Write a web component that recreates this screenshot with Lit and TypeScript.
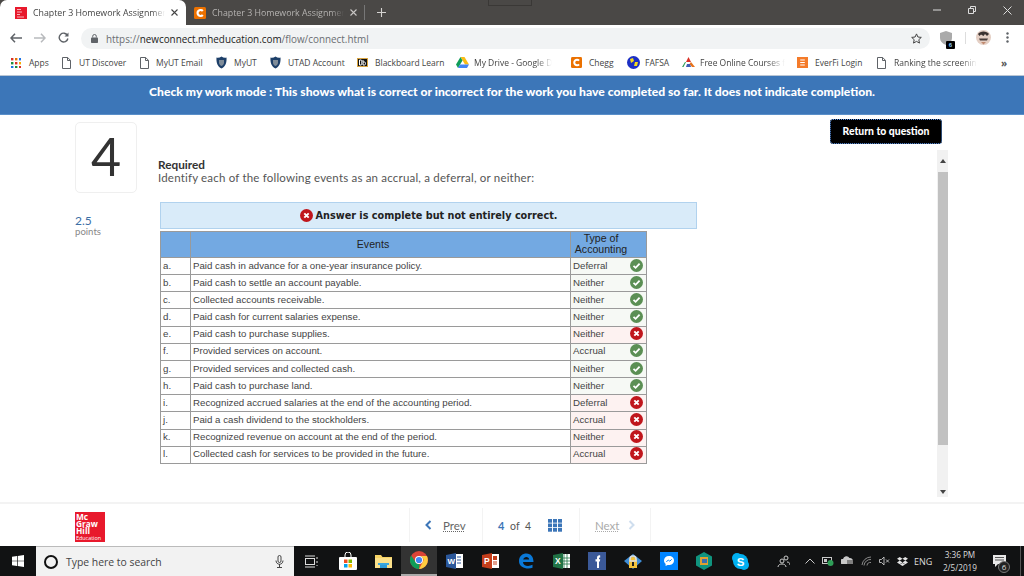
import { LitElement, html, css, svg } from "lit";
import { customElement } from "lit/decorators.js";

const docIcon = (c = "#5f6368") => html`<svg class="ic" width="9" height="12" viewBox="0 0 9 12"><path d="M.5.500h5.200L8.500 3.400v8.100H.5z M5.500 .5v3h3" fill="#fff" stroke="${c}" stroke-width="1"/></svg>`;
const shield = html`<svg class="ic" width="11" height="13" viewBox="0 0 11 13"><path d="M.5 1.500C2 2 4 1.600 5.500.5 7 1.600 9 2 10.500 1.500c.4 5-1 9-5 11-4-2-5.400-6-5-11z" fill="#1d3f69"/><path d="M3 4h5v2.500c0 2-1.200 3-2.500 3.500C4.200 9.500 3 8.500 3 6.500z" fill="#7f8c99"/></svg>`;
const appsIcon = html`<svg class="ic" width="10" height="10" viewBox="0 0 10 10">${[
  ["#d93025","#e37400","#1a73e8"],["#1e8e3e","#d93025","#f9ab00"],["#1a73e8","#1e8e3e","#d93025"],
].map((row, y) => row.map((c, x) => svg`<rect x="${x * 4}" y="${y * 4}" width="2.400" height="2.400" fill="${c}"/>`))}</svg>`;
const bb = html`<svg class="ic" width="11" height="9" viewBox="0 0 11 9"><rect x=".5" y=".5" width="10" height="8" fill="#111" stroke="#d9a441"/><path d="M2.500 2v5h1.600c1 0 1-2.500 0-2.500 1 0 1-2.500 0-2.500zM6 2v5h1.600c1.200 0 1.200-3 0-3H6" fill="none" stroke="#fff"/></svg>`;
const drive = html`<svg class="ic" width="13" height="11" viewBox="0 0 13 11"><path d="M4.500 0h4L13 7.500H9z" fill="#f9bc15"/><path d="M4.500 0 0 7.500l2 3.500L6.500 3.500z" fill="#0f9d58"/><path d="M2 11h9l2-3.500H4z" fill="#4285f4"/></svg>`;
const chegg = (s = 11) => html`<svg class="ic" width="${s}" height="${s}" viewBox="0 0 12 12"><rect width="12" height="12" rx="1.500" fill="#eb7100"/><path d="M8.800 4A3 3 0 1 0 8.800 8" fill="none" stroke="#fff" stroke-width="2.200"/></svg>`;
const fafsa = html`<svg class="ic" width="13" height="13" viewBox="0 0 13 13"><circle cx="6.500" cy="6.500" r="6.500" fill="#1c2fc4"/><path d="M3 3l3-1 1 3-3 2zM8 6l3 0-1 4-3 0z" fill="#f2d91e"/></svg>`;
const free = html`<svg class="ic" width="13" height="11" viewBox="0 0 13 11"><path d="M6.500 0 9 5H4z" fill="#d93025"/><path d="M4 5 1.500 10H0L3 5z" fill="#2f9e58"/><path d="M9 5l4 5h-3L7.500 7z" fill="#e8711a"/><path d="M5 7h3l1 3H4z" fill="#3f5fb5"/></svg>`;
const everfi = html`<svg class="ic" width="11" height="11" viewBox="0 0 12 12"><rect width="12" height="12" fill="#f47b2a"/><path d="M3.500 3.200h5M3.500 6h5M3.500 8.800h5" stroke="#fff" stroke-width="1.200"/></svg>`;

const bookmarks = [
  { t: "Apps", i: appsIcon, w: 51, g: 8 },
  { t: "UT Discover", i: docIcon(), w: 78, g: 8 },
  { t: "MyUT Email", i: docIcon(), w: 76, g: 7 },
  { t: "MyUT", i: shield, w: 54, g: 7 },
  { t: "UTAD Account", i: shield, w: 87, g: 7 },
  { t: "Blackboard Learn", i: bb, w: 99, g: 7 },
  { t: "My Drive - Google D", i: drive, w: 115, g: 5, fade: true },
  { t: "Chegg", i: chegg(), w: 56, g: 7 },
  { t: "FAFSA", i: fafsa, w: 55, g: 5 },
  { t: "Free Online Courses f", i: free, w: 115, g: 5, fade: true },
  { t: "EverFi Login", i: everfi, w: 80, g: 7 },
  { t: "Ranking the screenin", i: docIcon(), w: 113, g: 8, fade: true },
];

const rows: [string, string, string, boolean][] = [
  ["a.", "Paid cash in advance for a one-year insurance policy.", "Deferral", true],
  ["b.", "Paid cash to settle an account payable.", "Neither", true],
  ["c.", "Collected accounts receivable.", "Neither", true],
  ["d.", "Paid cash for current salaries expense.", "Neither", true],
  ["e.", "Paid cash to purchase supplies.", "Neither", false],
  ["f.", "Provided services on account.", "Accrual", true],
  ["g.", "Provided services and collected cash.", "Neither", true],
  ["h.", "Paid cash to purchase land.", "Neither", true],
  ["i.", "Recognized accrued salaries at the end of the accounting period.", "Deferral", false],
  ["j.", "Paid a cash dividend to the stockholders.", "Accrual", false],
  ["k.", "Recognized revenue on account at the end of the period.", "Neither", false],
  ["l.", "Collected cash for services to be provided in the future.", "Accrual", false],
];

const okIcon = html`<svg class="ic" width="13" height="13" viewBox="0 0 13 13"><circle cx="6.500" cy="6.500" r="6.500" fill="#5b8f54"/><path d="M3.500 6.800 5.600 8.800 9.600 4.600" fill="none" stroke="#fff" stroke-width="1.800"/></svg>`;
const badIcon = html`<svg class="ic" width="13" height="13" viewBox="0 0 13 13"><circle cx="6.500" cy="6.500" r="6.500" fill="#c0161c"/><path d="M4.300 4.300 8.700 8.700M8.700 4.300 4.300 8.700" fill="none" stroke="#fff" stroke-width="1.900"/></svg>`;

const win = html`<svg class="ic" width="12" height="12" viewBox="0 0 12 12"><path d="M0 1.700 5 1v4.700H0zM5.700.9 12 0v5.700H5.700zM0 6.300h5V11l-5-.7zM5.700 6.300H12V12l-6.300-.9z" fill="#fff"/></svg>`;
const taskIcons = [
  html`<svg class="ic" width="13" height="13" viewBox="0 0 13 13"><rect x=".5" y="3.500" width="9" height="6" fill="none" stroke="#ddd"/><path d="M0 1h10M0 12h10M12 2v2M12 6v2M12 10v1" stroke="#ddd"/></svg>`,
  html`<svg class="ic" width="18" height="18" viewBox="0 0 18 18"><path d="M6 5V3a3 3 0 0 1 6 0v2" fill="none" stroke="#fff"/><rect y="5" width="18" height="13" rx="1" fill="#fff"/><rect x="5" y="7.500" width="3.500" height="3.500" fill="#f25022"/><rect x="9.500" y="7.500" width="3.500" height="3.500" fill="#7fba00"/><rect x="5" y="12" width="3.500" height="3.500" fill="#00a4ef"/><rect x="9.500" y="12" width="3.500" height="3.500" fill="#ffb900"/></svg>`,
  html`<svg class="ic" width="17" height="14" viewBox="0 0 17 14"><path d="M0 1h6l1.500 2H17v11H0z" fill="#f6d365"/><rect y="4" width="17" height="10" fill="#fbe08a"/><path d="M5 14v-3h7v3" fill="#2f9bd8"/><rect x="3" y="9" width="11" height="2" fill="#38a6e0"/></svg>`,
  html`<svg class="ic" width="18" height="18" viewBox="0 0 18 18"><circle cx="9" cy="9" r="9" fill="#db4437"/><path d="M9 18a9 9 0 0 1-7.800-13.500L5.500 11a4 4 0 0 0 4 2z" fill="#0f9d58"/><path d="M9 5h7.900A9 9 0 0 1 9 18l3.500-6.500A4 4 0 0 0 9 5z" fill="#ffcd40"/><circle cx="9" cy="9" r="4" fill="#fff"/><circle cx="9" cy="9" r="3.100" fill="#4285f4"/></svg>`,
  html`<svg class="ic" width="17" height="16" viewBox="0 0 17 16"><rect x="5" y="1" width="12" height="14" fill="#fff"/><path d="M11 4h4M11 7h4M11 10h4" stroke="#2b579a"/><path d="M0 2 10 0v16L0 14z" fill="#2b579a"/><text x="1.500" y="11" font-size="8" font-weight="700" fill="#fff" font-family="Liberation Sans">W</text></svg>`,
  html`<svg class="ic" width="17" height="16" viewBox="0 0 17 16"><rect x="5" y="1" width="12" height="14" fill="#fff"/><path d="M11 9h4M11 11h4" stroke="#c43e1c"/><rect x="11" y="3" width="4" height="4" fill="#c43e1c"/><path d="M0 2 10 0v16L0 14z" fill="#c43e1c"/><text x="2" y="11" font-size="8.500" font-weight="700" fill="#fff" font-family="Liberation Sans">P</text></svg>`,
  html`<svg class="ic" width="16" height="16" viewBox="0 0 16 16"><path d="M1 8C1 3 4.500.5 8.500.5 13 .5 15.500 4 15.500 9H5c0 4 5.500 5 9.500 2.800v3C10 16.500 1 15.500 1 8zM5.200 6.500h6C11 3 5.800 3 5.200 6.500z" fill="#0a78d7"/></svg>`,
  html`<svg class="ic" width="17" height="16" viewBox="0 0 17 16"><rect x="5" y="1" width="12" height="14" fill="#fff"/><path d="M11 1v14M14 1v14M5 5h12M5 8h12M5 11h12" stroke="#217346" stroke-width=".8"/><path d="M0 2 10 0v16L0 14z" fill="#217346"/><text x="2" y="11" font-size="8.500" font-weight="700" fill="#fff" font-family="Liberation Sans">X</text></svg>`,
  html`<svg class="ic" width="18" height="18" viewBox="0 0 18 18"><rect width="18" height="18" fill="#3b5998"/><path d="M9 16V9.500H7.500V7.300H9V6c0-2 1-2.800 3.200-2.600v2c-1 0-1.200.2-1.200.9v1h1.200l-.3 2.200H11V16z" fill="#fff"/></svg>`,
  html`<svg class="ic" width="18" height="18" viewBox="0 0 18 18"><path d="M0 9 9 2l9 7-9 8z" fill="#3f8ed8"/><path d="M5 9a4 4 0 0 1 8 0v7H5z" fill="#f3c23c"/><path d="M6 7a3 3 0 0 1 6 0v2H6z" fill="none" stroke="#ddd" stroke-width="1.500"/><rect x="8" y="10" width="2" height="4" fill="#222"/></svg>`,
  html`<svg class="ic" width="18" height="18" viewBox="0 0 18 18"><rect width="18" height="18" fill="#0084ff"/><path d="M9 4C6 4 4 6 4 8.500c0 1.400.6 2.500 1.600 3.300V14l2-1.100c2.500.6 6.400-.6 6.400-4.400C14 6 12 4 9 4z" fill="#fff"/><path d="M6.300 10 8.300 8l1.500 1.200L11.700 7.300" fill="none" stroke="#0084ff"/></svg>`,
  html`<svg class="ic" width="16" height="18" viewBox="0 0 16 18"><path d="M8 0l8 4.500v9L8 18l-8-4.500v-9z" fill="#10947f"/><rect x="4" y="5" width="8" height="8" fill="#e0a030"/><rect x="6" y="7" width="5" height="4" fill="#3b6fb0"/></svg>`,
  html`<svg class="ic" width="17" height="17" viewBox="0 0 17 17"><circle cx="5" cy="5" r="5" fill="#00aff0"/><circle cx="12" cy="12" r="5" fill="#00aff0"/><circle cx="8.500" cy="8.500" r="7.500" fill="#00aff0"/><text x="8.500" y="12.500" text-anchor="middle" font-size="11.500" font-weight="700" fill="#fff" font-family="Liberation Sans">S</text></svg>`,
];

const grayC = "#c9c9c9";
const tray = [
  html`<svg class="ic" width="10" height="6" viewBox="0 0 10 6"><path d="M.5 5.500 5 1l4.500 4.500" fill="none" stroke="${grayC}"/></svg>`,
  html`<svg class="ic" width="12" height="9" viewBox="0 0 12 9"><rect x=".5" y=".5" width="9" height="6" fill="none" stroke="${grayC}"/><rect x="2" y="2" width="3" height="3" fill="${grayC}"/><circle cx="8.500" cy="6" r="3" fill="#2f9e58"/></svg>`,
  html`<svg class="ic" width="13" height="10" viewBox="0 0 13 10"><path d="M1 8a2.500 2.500 0 0 1 1-5 3.500 3.500 0 0 1 6.500-1A3 3 0 0 1 12 5v3z" fill="${grayC}"/><path d="M7 4v6M9 4v6M11 4v6" stroke="#111" stroke-width=".8"/></svg>`,
  html`<svg class="ic" width="11" height="10" viewBox="0 0 11 10"><path d="M1 9a9 9 0 0 1 9-8M3 9.500a6.500 6.500 0 0 1 7-6M6 9.500a3.500 3.500 0 0 1 4-3" fill="none" stroke="#8a8a8a"/></svg>`,
  html`<svg class="ic" width="11" height="10" viewBox="0 0 11 10"><path d="M.5 3.500h2L5 1v8L2.500 6.500h-2z" fill="none" stroke="${grayC}" stroke-width=".9"/><path d="M7 3.500l3 3M10 3.500l-3 3" stroke="${grayC}" stroke-width=".9"/></svg>`,
  html`<svg class="ic" width="11" height="9" viewBox="0 0 11 9"><path d="M2.750 0 5.500 1.800 2.750 3.600 0 1.800zM8.250 0 11 1.800 8.250 3.600 5.500 1.800zM2.750 3.600 5.500 5.400 2.750 7.200 0 5.400zM8.250 3.600 11 5.400 8.250 7.200 5.500 5.400zM2.900 7.600 5.500 6 8.100 7.600 5.500 9z" fill="#e4e4e4"/></svg>`,
];

@customElement("app-root")
export class AppRoot extends LitElement {
  static styles = css`
    :host { display: flex; flex-direction: column; width: 1024px; height: 576px; overflow: hidden; background: #fff; font-family: "Lato", sans-serif; position: relative; }
    * { box-sizing: border-box; }
    .ic { display: block; flex: none; }

    .tabs { height: 25px; background: #4a4846; display: flex; align-items: stretch; flex: none; position: relative; }
    .notch { position: absolute; left: 488px; top: 0; width: 44px; height: 6px; border: 1px solid #3a3836; border-top: 0; }
    .tab { display: flex; align-items: center; font: 8.800px "Open Sans", sans-serif; white-space: nowrap; }
    .tab.on { width: 186px; background: #fff; border-radius: 7px 7px 0 0; padding-left: 15px; color: #444; }
    .tab.off { width: 178px; padding-left: 8px; color: #b5b3b1; }
    .tab .lbl { -webkit-mask-image: linear-gradient(90deg,#000 90%,transparent); mask-image: linear-gradient(90deg,#000 90%,transparent); width: 132px; margin-left: 6px; }
    .tab svg.x { margin-left: 6px; }
    .tabsep { width: 1px; height: 15px; background: #777; align-self: center; }
    .plus { margin-left: 12px; align-self: center; }
    .spacer { flex: 1; }
    .winctl { display: flex; align-items: center; margin-right: 12px; gap: 27px; padding-bottom: 5px; }

    .toolbar { height: 25px; flex: none; display: flex; align-items: center; background: #fff; padding-left: 10px; }
    .nav-btns { display: flex; align-items: center; gap: 12px; width: 71px; }
    .address { width: 849px; height: 21px; margin-top: 2px; background: #f1f3f4; border-radius: 11px; display: flex; align-items: center; padding: 0 8px 0 10px; font: 9.900px "Open Sans", sans-serif; color: #6b6e72; }
    .address .dom { color: #222; }
    .address .url { margin-left: 8px; flex: 1; }
    .tool-right { display: flex; align-items: center; position: relative; flex: 1; padding-left: 10px; }
    .ext { position: relative; width: 12px; height: 14px; }
    .ext-badge { position: absolute; right: -3px; bottom: -4px; width: 9px; height: 8px; background: #000; border-radius: 1px; color: #8cf; font: 700 6px "Liberation Sans", sans-serif; text-align: center; line-height: 8px; }
    .tsep { width: 1px; height: 12px; background: #ddd; margin: 0 10px 0 13px; }
    .menu { margin-left: 15px; }

    .bookmarks { height: 26px; flex: none; display: flex; align-items: center; padding-left: 11px; background: #fff; font: 8.500px "Open Sans", sans-serif; color: #444; position: relative; border-bottom: 1px solid #b9c6d5; }
    .bm { display: flex; align-items: center; flex: none; white-space: nowrap; }
    .bm .fade { -webkit-mask-image: linear-gradient(90deg,#000 80%,transparent 100%); mask-image: linear-gradient(90deg,#000 80%,transparent 100%); }
    .more { margin-left: 11px; color: #555; font-size: 10px; font-weight: 700; }

    .banner { height: 39px; flex: none; background: #3c76b8; border-bottom: 1px solid #5a8fc9; display: flex; align-items: center; justify-content: center; color: #fff; font-weight: 900; font-size: 12.150px; padding: 0 0 8px 0; }

    .content { flex: 1; min-height: 0; display: flex; padding-left: 75px; }
    .leftcol { width: 85px; flex: none; padding-top: 7px; }
    .qnum { width: 62px; height: 71px; border: 1px solid #efefef; border-radius: 5px; display: flex; align-items: center; justify-content: center; font-size: 52px; color: #333; font-weight: 400; padding-bottom: 3px; }
    .pts { margin-top: 21px; font-size: 12px; line-height: 13px; color: #3c6ea5; }
    .ptl { font-size: 9.600px; line-height: 10px; color: #888; }
    .maincol { width: 788px; flex: none; display: flex; flex-direction: column; min-height: 0; }
    .rethead { height: 35px; flex: none; display: flex; justify-content: flex-end; padding: 4px 6px 0 0; }
    .retbtn { width: 112px; height: 25px; background: #000; color: #fff; border: 1px dotted #5b95e8; border-radius: 3px; display: flex; align-items: center; justify-content: center; font-size: 10.400px; font-weight: 900; padding-bottom: 2px; }
    .scroller { flex: 1; min-height: 0; display: flex; margin-bottom: 5px; }
    .inner { flex: 1; padding-top: 8px; }
    .req { font-size: 11.800px; line-height: 13px; font-weight: 700; color: #333; margin-left: -2px; }
    .inst { font-size: 11.500px; line-height: 13px; color: #555; margin-left: -2px; letter-spacing: .19px; }
    .note { width: 537px; height: 27px; margin-top: 18px; background: #d9ebf9; border: 1px solid #b1d2ee; display: flex; align-items: center; justify-content: center; gap: 3px; font: 700 9.700px "DejaVu Sans", sans-serif; color: #222; }
    table { margin-top: 2px; width: 486px; border-collapse: collapse; table-layout: fixed; font: 9.700px "Liberation Sans", sans-serif; color: #444; }
    th, td { border: 1px solid #9a9a9a; padding: 0 2px 2px; text-align: left; font-weight: 400; overflow: hidden; white-space: nowrap; height: 17.170px; line-height: 11px; }
    th { background: #73a9e2; color: #222; text-align: center; font-size: 10.600px; height: 26px; padding: 0 17px 1px 2px; }
    td.ans { padding-right: 3px; }
    td.ans.ok { background: #f6f9f5; }
    td.ans.bad { background: #fdf2f1; }
    .anscell { display: flex; align-items: center; justify-content: space-between; }
    .sbar { width: 11px; flex: none; background: #f1f1f1; display: flex; flex-direction: column; align-items: center; }
    .sarrow { height: 22px; flex: none; display: flex; align-items: center; justify-content: center; }
    .sarrow.dn { height: 52px; align-items: flex-end; padding-bottom: 3px; }
    .thumb { flex: 1; width: 10px; background: #c1c1c1; }

    .footer { height: 44px; flex: none; border-top: 2px solid #f3f3f3; display: flex; align-items: center; padding-left: 75px; }
    .logo { width: 30px; height: 30px; margin-top: 3px; background: #e8192c; color: #fff; font: 700 8.300px/7.300px "Open Sans", sans-serif; padding: 1px 0 0 1px; }
    .logo small { display: block; font-size: 5.400px; line-height: 6px; margin-top: 1px; font-weight: 400; white-space: nowrap; }
    .pager { margin-left: 304px; display: flex; height: 34px; }
    .seg { display: flex; align-items: center; border-left: 1px solid #f3f3f3; font-size: 11.500px; }
    .seg.prev { width: 73px; padding-left: 15px; color: #666; gap: 11px; }
    .seg.prev u, .seg.next u { text-decoration: underline dotted; }
    .seg.page { width: 97px; padding-left: 15px; color: #555; font-size: 10.500px; word-spacing: 3px; }
    .seg.page b { color: #3c76b8; font-size: 11px; font-weight: 700; }
    .seg.page svg { margin-left: 17px; }
    .seg.next { width: 72px; padding-left: 15px; color: #aaa; gap: 9px; border-right: 1px solid #f3f3f3; }

    .taskbar { height: 30px; flex: none; background: #111213; display: flex; align-items: stretch; color: #ddd; }
    .start { width: 36px; display: flex; align-items: center; justify-content: center; }
    .search { width: 258px; background: #f2f2f2; border-top: 1px solid #bbb; display: flex; align-items: center; padding: 0 10px 0 8px; font: 10.400px "Open Sans", sans-serif; color: #444; }
    .search .ring { width: 14px; height: 14px; border: 2px solid #111; border-radius: 50%; margin-right: 8px; flex: none; }
    .search span { flex: 1; }
    .slot { width: 35.700px; display: flex; align-items: center; justify-content: center; flex: none; }
    .slot.active { background: #333; border-bottom: 2px solid #aaa; }
    .people { margin-left: 19px; width: 16px; display: flex; align-items: center; }
    .trayi { display: flex; align-items: center; gap: 7px; margin-left: 12px; }
    .eng { font: 9px "Open Sans", sans-serif; margin-left: 6px; width: 19px; display: flex; align-items: center; color: #ddd; }
    .clock { width: 54px; display: flex; flex-direction: column; align-items: center; justify-content: center; font: 8.200px/13px "Open Sans", sans-serif; color: #ddd; }
    .notif { position: relative; margin-left: 6px; display: flex; align-items: center; }
    .notif-b { position: absolute; left: 5px; top: 15px; width: 12px; height: 12px; border-radius: 50%; background: #222; border: 1px solid #777; color: #ddd; font: 8px/10px "Open Sans", sans-serif; text-align: center; }
    .edge { margin-left: auto; margin-right: 3px; width: 1px; background: #555; }
  `;

  render() {
    return html`
      <div class="tabs">
        <div class="notch"></div>
        <div class="tab on">
          <svg class="ic" width="12" height="12" viewBox="0 0 12 12"><rect width="12" height="12" fill="#e8192c"/><path d="M2 2.500h4M2 5h5M2 7.500h3M2 10h7" stroke="#f7b5bb"/></svg>
          <div class="lbl">Chapter 3 Homework Assignmen</div>
          <svg class="ic x" width="7" height="7" viewBox="0 0 7 7"><path d="M.5.500l6 6M6.500.500l-6 6" stroke="#444" stroke-width="1.100"/></svg>
        </div>
        <div class="tab off">
          ${chegg(12)}
          <div class="lbl">Chapter 3 Homework Assignmen</div>
          <svg class="ic x" width="7" height="7" viewBox="0 0 7 7"><path d="M.5.500l6 6M6.500.500l-6 6" stroke="#c9c7c5" stroke-width="1.100"/></svg>
        </div>
        <div class="tabsep"></div>
        <svg class="ic plus" width="9" height="9" viewBox="0 0 9 9"><path d="M4.500 0v9M0 4.500h9" stroke="#d5d3d1" stroke-width="1.100"/></svg>
        <div class="spacer"></div>
        <div class="winctl">
          <svg class="ic" width="8" height="8" viewBox="0 0 8 8"><path d="M0 4h8" stroke="#ddd"/></svg>
          <svg class="ic" width="8" height="8" viewBox="0 0 8 8"><path d="M.5 2.500h5v5h-5zM2.500 2.500v-2h5v5h-2" fill="none" stroke="#ddd"/></svg>
          <svg class="ic" width="9" height="9" viewBox="0 0 9 9"><path d="M.5.500l8 8M8.500.500l-8 8" stroke="#ddd"/></svg>
        </div>
      </div>

      <div class="toolbar">
        <div class="nav-btns">
          <svg class="ic" width="12" height="10" viewBox="0 0 12 10"><path d="M5 .7 1 5l4 4.300M1 5h11" fill="none" stroke="#5f6368" stroke-width="1.500"/></svg>
          <svg class="ic" width="12" height="10" viewBox="0 0 12 10"><path d="M7 .7 11 5 7 9.300M11 5H0" fill="none" stroke="#b8babd" stroke-width="1.500"/></svg>
          <svg class="ic" width="11" height="11" viewBox="0 0 11 11"><path d="M9.500 3.500A4.400 4.400 0 1 0 9.900 6.500" fill="none" stroke="#5f6368" stroke-width="1.400"/><path d="M10.500 .5v4h-4z" fill="#5f6368"/></svg>
        </div>
        <div class="address">
          <svg class="ic" width="7" height="9" viewBox="0 0 7 9"><rect y="3.500" width="7" height="5.500" rx=".8" fill="#5f6368"/><path d="M1.700 3.500V2.300a1.800 1.800 0 0 1 3.600 0v1.200" fill="none" stroke="#5f6368"/></svg>
          <div class="url">https://<span class="dom">newconnect.mheducation.com</span>/flow/connect.html</div>
          <svg class="ic" width="11" height="11" viewBox="0 0 11 11"><path d="M5.500.9 6.900 4l3.400.400-2.500 2.300.7 3.400-3-1.700-3 1.700.7-3.400L.7 4.400 4.100 4z" fill="none" stroke="#444" stroke-width="1"/></svg>
        </div>
        <div class="tool-right">
          <div class="ext">
            <svg class="ic" width="12" height="14" viewBox="0 0 12 14"><path d="M0 2 6 0l6 2v5c0 3-2 5.500-6 7-4-1.500-6-4-6-7z" fill="#aaa"/></svg>
            <div class="ext-badge">6</div>
          </div>
          <div class="tsep"></div>
          <svg class="ic" width="15" height="15" viewBox="0 0 15 15"><circle cx="7.500" cy="7.500" r="7.500" fill="#e4cfc4"/><path d="M2 4C4 .5 11 .5 13 4l-2 2-2-2-1.500 2L5 4.500 3.500 6z" fill="#3a3230"/><path d="M3 8.500h9l-1 2H4z" fill="#4a3f3c"/><path d="M5 12h5l-2.500 2.500z" fill="#c08a70"/></svg>
          <svg class="ic menu" width="3" height="11" viewBox="0 0 3 11"><circle cx="1.500" cy="1.500" r="1.200" fill="#5f6368"/><circle cx="1.500" cy="5.500" r="1.200" fill="#5f6368"/><circle cx="1.500" cy="9.500" r="1.200" fill="#5f6368"/></svg>
        </div>
      </div>

      <div class="bookmarks">
        ${bookmarks.map(b => html`<div class="bm" style="width:${b.w}px;gap:${b.g}px">${b.i}<div class="txt ${b.fade ? "fade" : ""}">${b.t}</div></div>`)}
        <div class="more">»</div>
      </div>

      <div class="banner">Check my work mode : This shows what is correct or incorrect for the work you have completed so far. It does not indicate completion.</div>

      <div class="content">
        <div class="leftcol">
          <div class="qnum">4</div>
          <div class="pts">2.5</div>
          <div class="ptl">points</div>
        </div>
        <div class="maincol">
          <div class="rethead"><div class="retbtn">Return to question</div></div>
          <div class="scroller">
            <div class="inner">
              <div class="req">Required</div>
              <div class="inst">Identify each of the following events as an accrual, a deferral, or neither:</div>
              <div class="note">${badIcon}<span>Answer is complete but not entirely correct.</span></div>
              <table>
                <colgroup><col style="width:30px"/><col style="width:380px"/><col style="width:76px"/></colgroup>
                <thead><tr><th></th><th>Events</th><th>Type of<br/>Accounting</th></tr></thead>
                <tbody>
                  ${rows.map(r => html`<tr>
                    <td>${r[0]}</td><td>${r[1]}</td>
                    <td class="ans ${r[3] ? "ok" : "bad"}"><div class="anscell"><span>${r[2]}</span>${r[3] ? okIcon : badIcon}</div></td>
                  </tr>`)}
                </tbody>
              </table>
            </div>
            <div class="sbar">
              <div class="sarrow"><svg class="ic" width="6" height="4" viewBox="0 0 6 4"><path d="M3 0l3 4H0z" fill="#444"/></svg></div>
              <div class="thumb"></div>
              <div class="sarrow dn"><svg class="ic" width="6" height="4" viewBox="0 0 6 4"><path d="M3 4 6 0H0z" fill="#444"/></svg></div>
            </div>
          </div>
        </div>
      </div>

      <div class="footer">
        <div class="logo">Mc<br/>Graw<br/>Hill<small>Education</small></div>
        <div class="pager">
          <div class="seg prev">
            <svg class="ic" width="7" height="10" viewBox="0 0 7 10"><path d="M5.500 1 1.500 5l4 4" fill="none" stroke="#3c76b8" stroke-width="2"/></svg>
            <u>Prev</u>
          </div>
          <div class="seg page"><span><b>4</b> of 4</span>
            <svg class="ic" width="14" height="13" viewBox="0 0 14 13">${[0, 1, 2].map(y => [0, 1, 2].map(x => svg`<rect x="${x * 5}" y="${y * 4.500}" width="4" height="3.700" fill="#3c76b8"/>`))}</svg>
          </div>
          <div class="seg next"><u>Next</u>
            <svg class="ic" width="7" height="10" viewBox="0 0 7 10"><path d="M1.500 1l4 4-4 4" fill="none" stroke="#cfdeee" stroke-width="2"/></svg>
          </div>
        </div>
      </div>

      <div class="taskbar">
        <div class="start">${win}</div>
        <div class="search"><div class="ring"></div><span>Type here to search</span>
          <svg class="ic" width="9" height="13" viewBox="0 0 9 13"><rect x="3" y=".5" width="3" height="7" rx="1.500" fill="none" stroke="#444"/><path d="M1 5.500c0 5 7 5 7 0M4.500 9v3M2 12.500h5" fill="none" stroke="#444"/></svg>
        </div>
        ${taskIcons.map((ic, i) => html`<div class="slot ${i === 3 ? "active" : ""}">${ic}</div>`)}
        <div class="people"><svg class="ic" width="13" height="12" viewBox="0 0 13 12"><circle cx="5" cy="6" r="2" fill="none" stroke="#ccc"/><path d="M1 12c0-4 8-4 8 0" fill="none" stroke="#ccc"/><circle cx="9" cy="3" r="2" fill="none" stroke="#ccc"/><path d="M10 7c2 0 3 1 3 3" fill="none" stroke="#ccc"/></svg></div>
        <div class="trayi">${tray}</div>
        <div class="eng">ENG</div>
        <div class="clock"><div>3:36 PM</div><div>2/5/2019</div></div>
        <div class="notif">
          <svg class="ic" width="13" height="12" viewBox="0 0 13 12"><path d="M0 0h13v9H5l-3 3V9H0z" fill="#e8e8e8"/><path d="M2 2.500h9M2 5h9" stroke="#555"/></svg>
          <div class="notif-b">6</div>
        </div>
        <div class="edge"></div>
      </div>
    `;
  }
}
